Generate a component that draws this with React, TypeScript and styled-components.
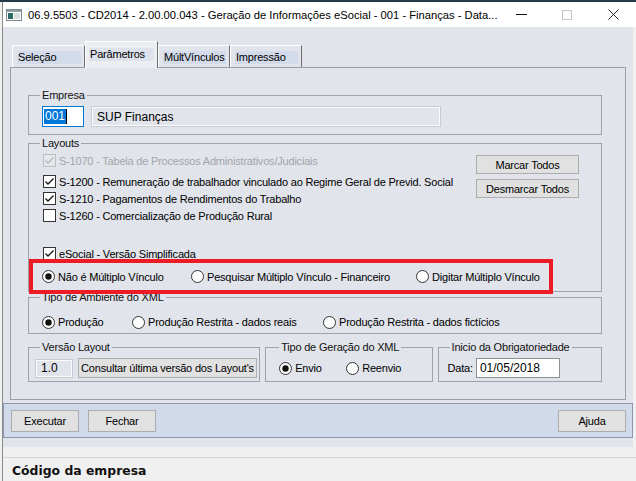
import styled, { createGlobalStyle } from 'styled-components';

const GlobalStyle = createGlobalStyle`
  html, body { margin: 0; padding: 0; background: #f1f1f1; }
  body {
    font-family: "Liberation Sans", Arial, sans-serif;
    font-size: 11px;
    letter-spacing: -0.2px;
    color: #000;
  }
  * { box-sizing: border-box; }
`;

const Screen = styled.div`
  width: 636px;
  height: 481px;
  overflow: hidden;
  display: flex;
  flex-direction: column;
`;

const TopStripe = styled.div`
  height: 2px;
  background: #1f3c47;
`;

const Frame = styled.div`
  flex: 1;
  margin-left: 2px;
  border-left: 1px solid #8b8b8b;
  display: flex;
  flex-direction: column;
`;

const TitleBar = styled.div`
  height: 25px;
  background: #fff;
  display: flex;
  align-items: center;
  padding-left: 3px;
`;

const TitleText = styled.div`
  margin-left: 6px;
  font-size: 11.2px;
  letter-spacing: 0;
  color: #000;
  white-space: nowrap;
  flex: 1;
`;

const Controls = styled.div`
  display: flex;
  align-items: center;
  height: 100%;
`;

const ControlBtn = styled.div`
  width: 46px;
  height: 100%;
  display: flex;
  align-items: center;
  justify-content: center;
`;

const Body = styled.div`
  margin-right: 3px;
  background: #e1e4eb;
  height: 420px;
  padding-top: 14px;
  display: flex;
  flex-direction: column;
`;

const TabRow = styled.div`
  display: flex;
  align-items: flex-end;
  padding-left: 9px;
  height: 26px;
  position: relative;
  z-index: 1;
`;

const Tab = styled.div<{ $active?: boolean; $width: number }>`
  width: ${(p) => p.$width}px;
  height: ${(p) => (p.$active ? 27 : 22)}px;
  margin-bottom: ${(p) => (p.$active ? -1 : 0)}px;
  background: ${(p) => (p.$active ? '#eceef2' : '#e1e4eb')};
  border-top: 1px solid #fdfdfd;
  border-left: 1px solid #fdfdfd;
  border-right: 1px solid #6f6f6f;
  padding: ${(p) => (p.$active ? '6px 3px 0 3px' : '5px 3px 0 4px')};
`;

const TabLabel = styled.div<{ $active?: boolean }>`
  height: 13px;
  line-height: 13px;
  padding-left: 1px;
  background: ${(p) => (p.$active ? '#dde2ec' : '#d3dbeb')};
  white-space: nowrap;
`;

const TabPanel = styled.div`
  margin: 0 7px;
  border: 1px solid #9aa0ab;
  padding: 20px 23px 17px 17px;
  display: flex;
  flex-direction: column;
`;

const Group = styled.fieldset<{ $pad: string; $w?: number; $mt?: number }>`
  margin: ${(p) => p.$mt ?? 0}px 0 0 0;
  border: 1px solid #9da2ac;
  padding: ${(p) => p.$pad};
  min-width: 0;
  width: ${(p) => (p.$w ? `${p.$w}px` : 'auto')};
`;

/* chrome offsets the legend by the fieldset's left padding, $ml compensates */
const Legend = styled.legend<{ $ml: number }>`
  margin-left: ${(p) => p.$ml}px;
  padding: 0 2px;
  line-height: 14px;
  font-size: 11px;
  color: #111;
`;

const Row = styled.div<{ $gap?: number }>`
  display: flex;
  align-items: center;
  gap: ${(p) => p.$gap ?? 0}px;
`;

const CodeBox = styled.div`
  width: 42px;
  height: 21px;
  border: 1px solid #0078d7;
  background: #fff;
  padding: 2px 0 0 1px;
  display: flex;
  align-items: flex-start;
`;

const Selected = styled.span`
  background: #0078d7;
  color: #fff;
  font-size: 12px;
  letter-spacing: 0;
  line-height: 15px;
  padding: 0 1px;
  border-right: 1px solid #000;
`;

const ReadOnlyField = styled.div<{ $w: number; $h?: number }>`
  width: ${(p) => p.$w}px;
  height: ${(p) => p.$h ?? 21}px;
  border: 1px solid #c9cbd0;
  box-shadow: inset 0 0 0 1px #fbfbfc;
  background: #e1e4eb;
  display: flex;
  align-items: center;
  padding-left: 5px;
  font-size: 12px;
  letter-spacing: 0;
`;

const WhiteField = styled.div<{ $w: number }>`
  width: ${(p) => p.$w}px;
  height: 20px;
  border: 1px solid #8f8f8f;
  background: #fff;
  display: flex;
  align-items: center;
  padding-left: 3px;
  font-size: 12px;
  letter-spacing: 0;
`;

const LayoutsBody = styled.div`
  display: grid;
  grid-template-columns: minmax(0, 1fr) auto;
`;

const CheckList = styled.div`
  display: flex;
  flex-direction: column;
  padding-top: 2px;
`;

const CheckRow = styled.div<{ $mt?: number; $disabled?: boolean }>`
  display: flex;
  align-items: center;
  height: 17px;
  margin-top: ${(p) => p.$mt ?? 0}px;
  gap: 3px;
  color: ${(p) => (p.$disabled ? '#a3a5a9' : '#000')};
  white-space: nowrap;
`;

const ButtonCol = styled.div`
  display: flex;
  flex-direction: column;
  gap: 5px;
  padding-top: 5px;
`;

const Button = styled.button<{ $w: number; $h?: number }>`
  width: ${(p) => p.$w}px;
  height: ${(p) => p.$h ?? 19}px;
  background: #e1e1e1;
  border: 1px solid #adadad;
  font-family: "Liberation Sans", Arial, sans-serif;
  font-size: 11px;
  letter-spacing: -0.2px;
  color: #000;
  padding: 0;
  white-space: nowrap;
`;

const Highlight = styled.div`
  width: 524px;
  height: 35px;
  margin: -3px 0 -3px -14px;
  border: 4px solid #ed1c24;
  display: flex;
  align-items: center;
  padding-left: 9px;
  position: relative;
`;

const RadioItem = styled.div<{ $w?: number }>`
  display: flex;
  align-items: center;
  gap: 3px;
  height: 16px;
  width: ${(p) => (p.$w ? `${p.$w}px` : 'auto')};
  white-space: nowrap;
`;

const BottomRow = styled.div`
  display: flex;
  gap: 5px;
  margin-top: 6px;
`;

const ButtonBar = styled.div`
  margin-top: 3px;
  height: 35px;
  background: #d0daeb;
  border: 1px solid #8d97aa;
  display: flex;
  align-items: center;
  padding: 0 6px 0 7px;
  gap: 9px;
`;

const Spacer = styled.div`
  flex: 1;
`;

const StatusArea = styled.div`
  flex: 1;
  background: #f0f0f0;
  padding-top: 10px;
`;

const StatusLine = styled.div`
  border-top: 1px solid #d7d7d7;
  padding: 5px 0 0 9px;
  font-family: "DejaVu Sans", Verdana, sans-serif;
  font-weight: bold;
  font-size: 12.4px;
  letter-spacing: 0;
  color: #111;
`;

function CheckBox({ checked, disabled }: { checked?: boolean; disabled?: boolean }) {
  const c = disabled ? '#bcbdc0' : '#333';
  return (
    <svg width="13" height="13" viewBox="0 0 13 13">
      <rect x="0.5" y="0.5" width="12" height="12" fill={disabled ? '#e6e7ea' : '#fff'} stroke={c} />
      {checked && (
        <path d="M2.5 6.5 L5 9 L10.5 3.5" fill="none" stroke={disabled ? '#b5b7bb' : '#111'} strokeWidth="1.3" />
      )}
    </svg>
  );
}

function Radio({ on }: { on?: boolean }) {
  return (
    <svg width="13" height="13" viewBox="0 0 13 13">
      <circle cx="6.5" cy="6.5" r="6" fill="#fff" stroke="#333" />
      {on && <circle cx="6.5" cy="6.5" r="3.2" fill="#111" />}
    </svg>
  );
}

function AppIcon() {
  return (
    <svg width="16" height="12" viewBox="0 0 16 12">
      <rect x="0.5" y="0.5" width="15" height="11" fill="#fff" stroke="#7d8a8f" />
      <rect x="1" y="1" width="14" height="2" fill="#8fa1a8" />
      <rect x="2" y="4" width="5" height="6" fill="#2d6a66" />
      <rect x="8" y="4" width="6" height="6" fill="#d9dee0" />
    </svg>
  );
}

const tabs = [
  { label: 'Seleção', w: 73 },
  { label: 'Parâmetros', w: 73, active: true },
  { label: 'MúltVínculos', w: 72 },
  { label: 'Impressão', w: 72 },
];

export default function App() {
  return (
    <Screen>
      <GlobalStyle />
      <TopStripe />
      <Frame>
        <TitleBar>
          <AppIcon />
          <TitleText>
            06.9.5503 - CD2014 - 2.00.00.043 - Geração de Informações eSocial - 001 - Finanças - Data...
          </TitleText>
          <Controls>
            <ControlBtn>
              <svg width="11" height="11" viewBox="0 0 11 11">
                <path d="M0 5.5 H11" stroke="#111" strokeWidth="1" />
              </svg>
            </ControlBtn>
            <ControlBtn>
              <svg width="10" height="10" viewBox="0 0 10 10">
                <rect x="0.5" y="0.5" width="9" height="9" fill="none" stroke="#c4c4c4" />
              </svg>
            </ControlBtn>
            <ControlBtn>
              <svg width="11" height="11" viewBox="0 0 11 11">
                <path d="M0.5 0.5 L10.5 10.5 M10.5 0.5 L0.5 10.5" stroke="#111" strokeWidth="0.9" />
              </svg>
            </ControlBtn>
          </Controls>
        </TitleBar>

        <Body>
          <TabRow>
            {tabs.map((t) => (
              <Tab key={t.label} $active={t.active} $width={t.w}>
                <TabLabel $active={t.active}>{t.label}</TabLabel>
              </Tab>
            ))}
          </TabRow>

          <TabPanel>
            <Group $pad="4px 0 7px 13px">
              <Legend $ml={-2}>Empresa</Legend>
              <Row $gap={7}>
                <CodeBox>
                  <Selected>001</Selected>
                </CodeBox>
                <ReadOnlyField $w={350}>SUP Finanças</ReadOnlyField>
              </Row>
            </Group>

            <Group $pad="0 22px 0 14px" $mt={1}>
              <Legend $ml={-3}>Layouts</Legend>
              <LayoutsBody>
                <CheckList>
                  <CheckRow $disabled>
                    <CheckBox checked disabled />
                    S-1070 - Tabela de Processos Administrativos/Judiciais
                  </CheckRow>
                  <CheckRow $mt={4}>
                    <CheckBox checked />
                    S-1200 - Remuneração de trabalhador vinculado ao Regime Geral de Previd. Social
                  </CheckRow>
                  <CheckRow>
                    <CheckBox checked />
                    S-1210 - Pagamentos de Rendimentos do Trabalho
                  </CheckRow>
                  <CheckRow>
                    <CheckBox />
                    S-1260 - Comercialização de Produção Rural
                  </CheckRow>
                  <CheckRow $mt={21}>
                    <CheckBox checked />
                    eSocial - Versão Simplificada
                  </CheckRow>
                </CheckList>
                <ButtonCol>
                  <Button $w={103}>Marcar Todos</Button>
                  <Button $w={103}>Desmarcar Todos</Button>
                </ButtonCol>
              </LayoutsBody>
              <Highlight>
                <RadioItem $w={149}>
                  <Radio on />
                  Não é Múltiplo Vínculo
                </RadioItem>
                <RadioItem $w={225}>
                  <Radio />
                  Pesquisar Múltiplo Vínculo - Financeiro
                </RadioItem>
                <RadioItem>
                  <Radio />
                  Digitar Múltiplo Vínculo
                </RadioItem>
              </Highlight>
            </Group>

            <Group $pad="10px 0 3px 13px" $mt={-2}>
              <Legend $ml={-2}>Tipo de Ambiente do XML</Legend>
              <Row>
                <RadioItem $w={90}>
                  <Radio on />
                  Produção
                </RadioItem>
                <RadioItem $w={191}>
                  <Radio />
                  Produção Restrita - dados reais
                </RadioItem>
                <RadioItem>
                  <Radio />
                  Produção Restrita - dados fictícios
                </RadioItem>
              </Row>
            </Group>

            <BottomRow>
              <Group $pad="4px 2px 3px 6px" $w={233}>
                <Legend $ml={5}>Versão Layout</Legend>
                <Row $gap={5}>
                  <ReadOnlyField $w={38} $h={19}>1.0</ReadOnlyField>
                  <Button $w={180} $h={20}>Consultar última versão dos Layout's</Button>
                </Row>
              </Group>
              <Group $pad="6px 0 2px 13px" $w={168}>
                <Legend $ml={0}>Tipo de Geração do XML</Legend>
                <Row>
                  <RadioItem $w={67}>
                    <Radio on />
                    Envio
                  </RadioItem>
                  <RadioItem>
                    <Radio />
                    Reenvio
                  </RadioItem>
                </Row>
              </Group>
              <Group $pad="4px 0 3px 9px" $w={165}>
                <Legend $ml={2}>Inicio da Obrigatoriedade</Legend>
                <Row $gap={3}>
                  <span>Data:</span>
                  <WhiteField $w={84}>01/05/2018</WhiteField>
                </Row>
              </Group>
            </BottomRow>
          </TabPanel>

          <ButtonBar>
            <Button $w={68} $h={22}>Executar</Button>
            <Button $w={68} $h={22}>Fechar</Button>
            <Spacer />
            <Button $w={68} $h={22}>Ajuda</Button>
          </ButtonBar>
        </Body>

        <StatusArea>
          <StatusLine>Código da empresa</StatusLine>
        </StatusArea>
      </Frame>
    </Screen>
  );
}
